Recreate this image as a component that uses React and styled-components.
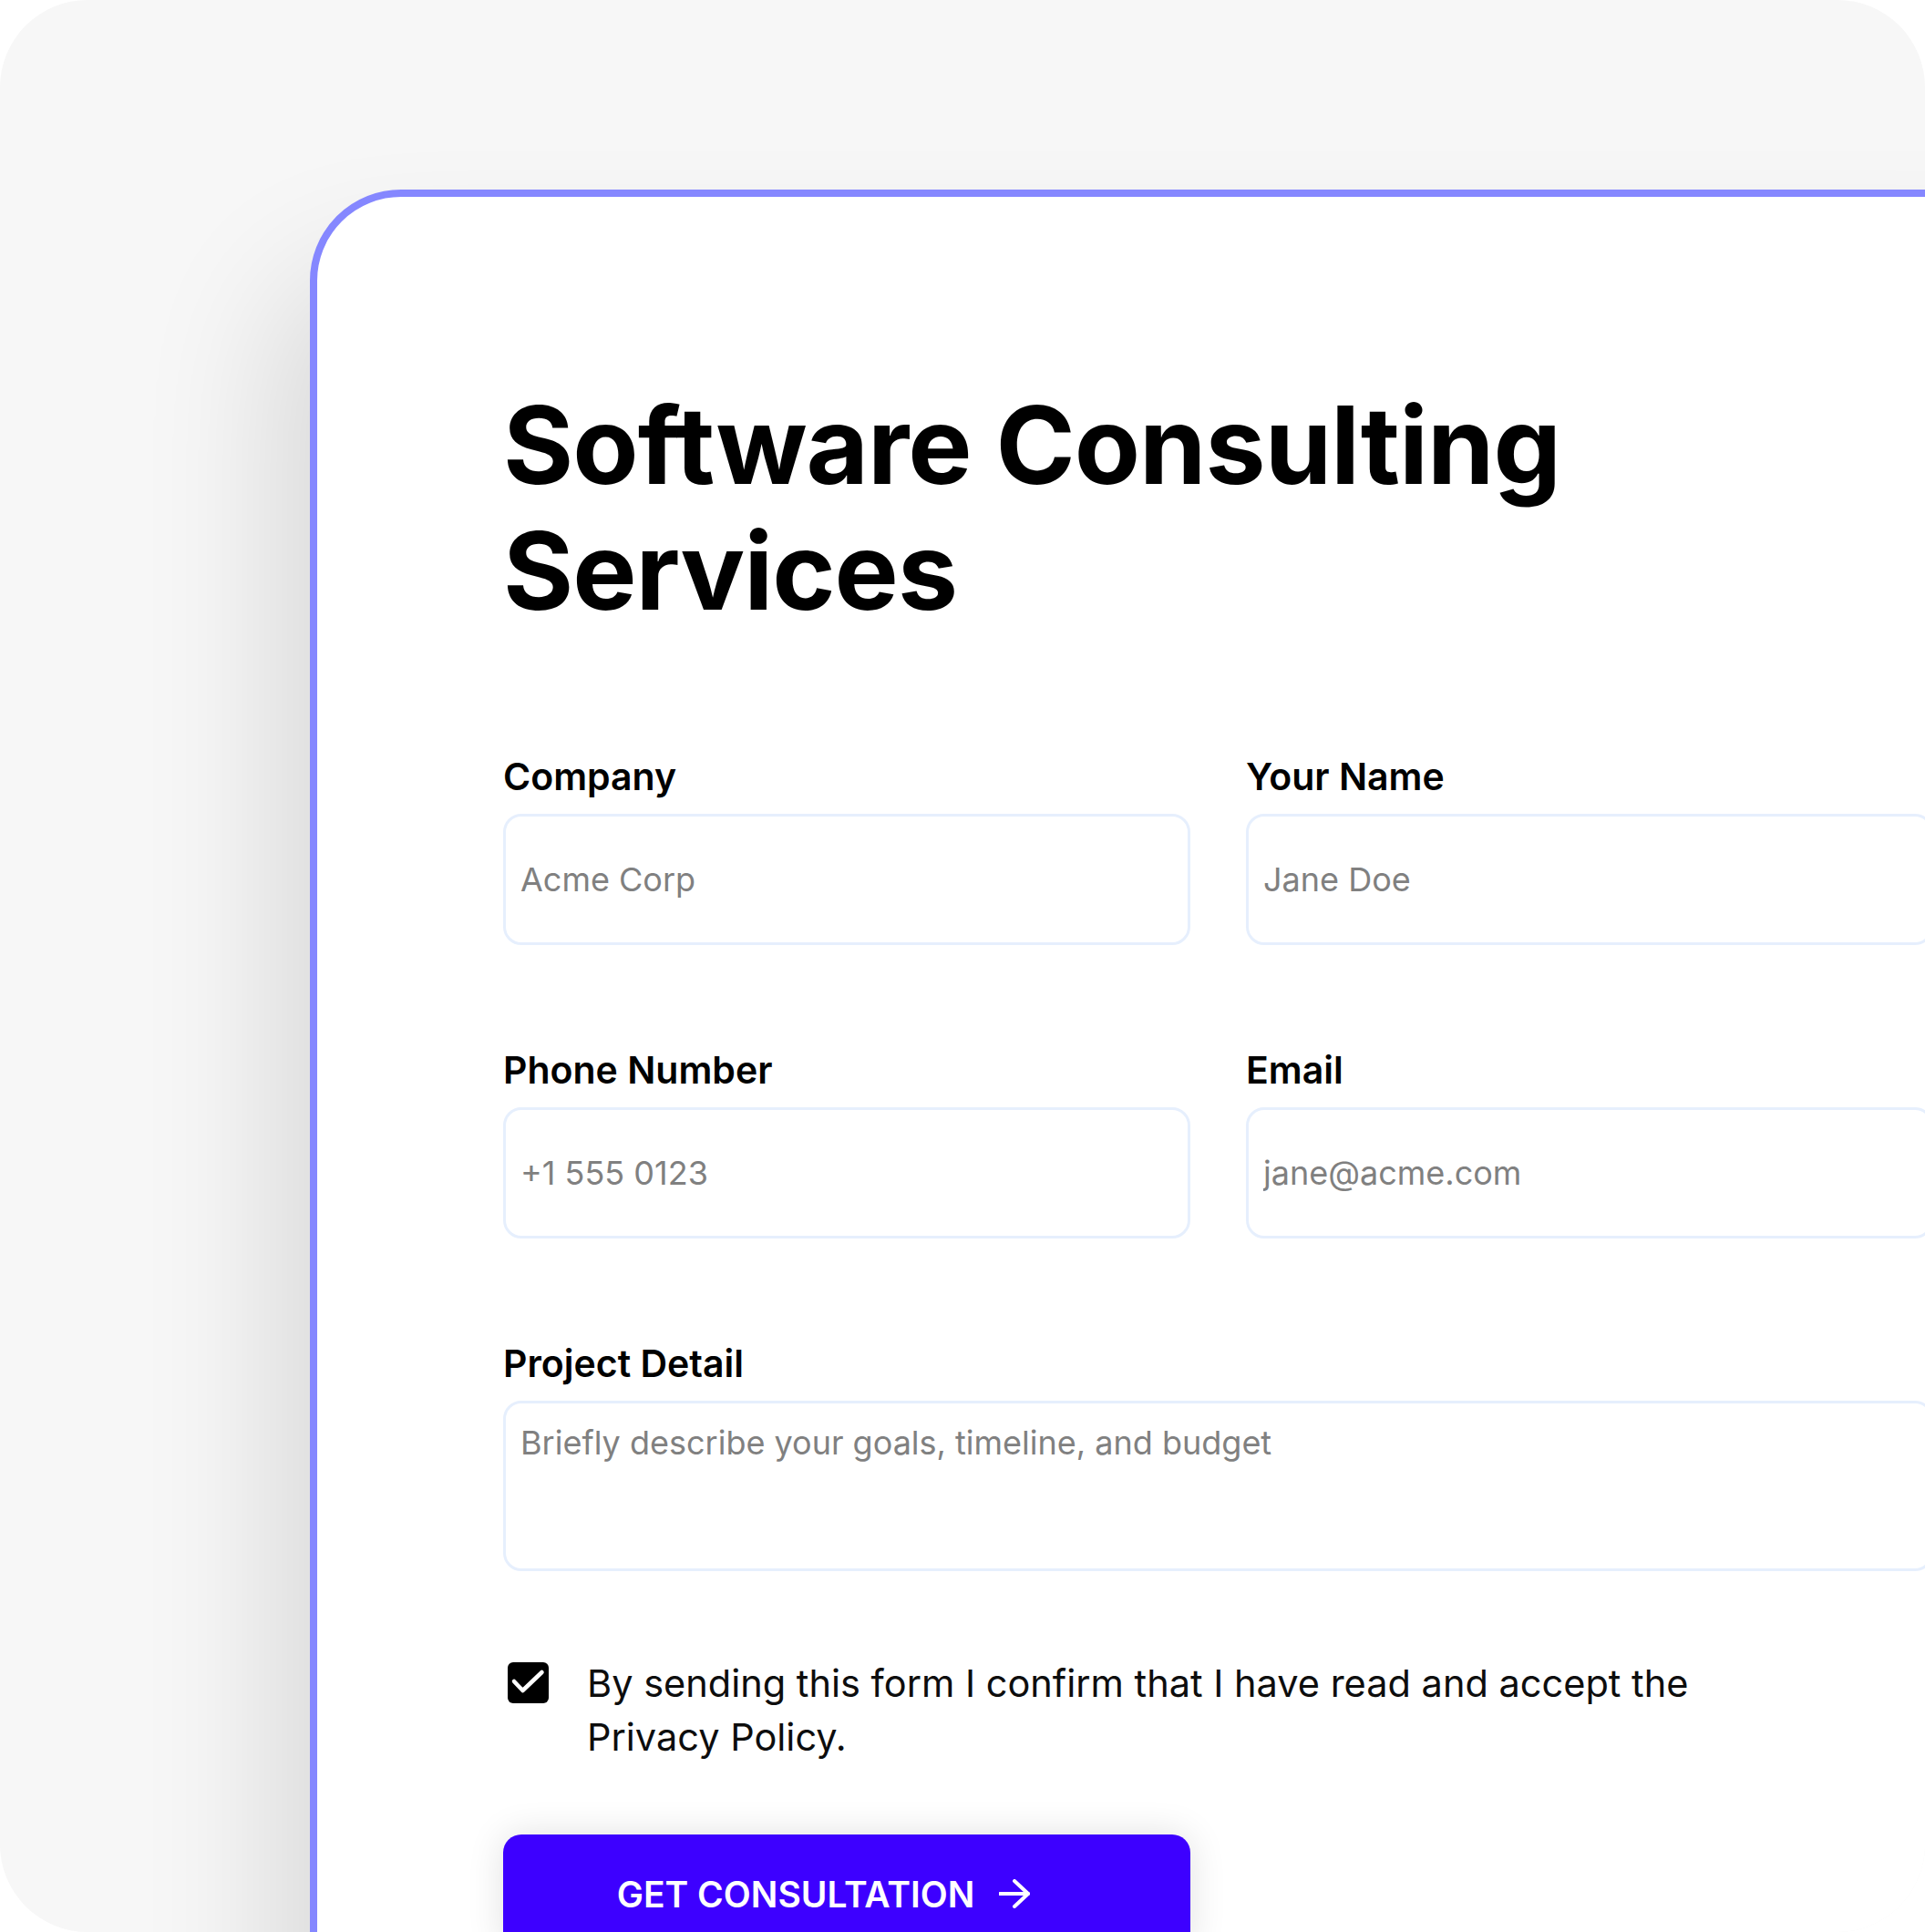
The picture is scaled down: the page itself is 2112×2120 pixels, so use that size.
import React from "react";
import styled, { createGlobalStyle } from "styled-components";

const GlobalStyle = createGlobalStyle`
  html, body {
    margin: 0;
    padding: 0;
    background: #ffffff;
  }
  body {
    font-family: Inter, "Noto Sans", sans-serif;
    color: #000;
    -webkit-font-smoothing: antialiased;
  }
  * {
    box-sizing: border-box;
  }
`;

const App = () => {
  return (
    <>
      <GlobalStyle />
      <Page>
        <Card>
          <Title>
            Software Consulting
            <br />
            Services
          </Title>

          <FieldsGrid>
            <Field>
              <Label>Company</Label>
              <Input placeholder="Acme Corp" />
            </Field>
            <Field>
              <Label>Your Name</Label>
              <Input placeholder="Jane Doe" />
            </Field>
            <Field>
              <Label>Phone Number</Label>
              <Input placeholder="+1 555 0123" />
            </Field>
            <Field>
              <Label>Email</Label>
              <Input placeholder="jane@acme.com" />
            </Field>
            <Field wide>
              <Label>Project Detail</Label>
              <TextArea placeholder="Briefly describe your goals, timeline, and budget" />
            </Field>
          </FieldsGrid>

          <ConsentRow>
            <CheckBox>
              <svg width="45" height="45" viewBox="0 0 45 45" fill="none">
                <path
                  d="M7 21 L16.5 31 L37.5 11"
                  stroke="#fff"
                  strokeWidth="4.5"
                  strokeLinecap="round"
                  strokeLinejoin="round"
                />
              </svg>
            </CheckBox>
            <ConsentText>
              By sending this form I confirm that I have read and accept the
              Privacy Policy.
            </ConsentText>
          </ConsentRow>

          <SubmitButton>
            GET CONSULTATION
            <svg width="34" height="32" viewBox="0 0 34 32" fill="none">
              <path d="M1 16 H32" stroke="#fff" strokeWidth="4" strokeLinecap="round" />
              <path
                d="M17 2 L32 16 L17 30"
                stroke="#fff"
                strokeWidth="4"
                strokeLinecap="round"
                strokeLinejoin="round"
              />
            </svg>
          </SubmitButton>
        </Card>
      </Page>
    </>
  );
};

export default App;

const Page = styled.div`
  width: 2112px;
  height: 2120px;
  overflow: hidden;
  background: #f7f7f7;
  border-radius: 96px;
  padding: 208px 0 0 340px;
`;

const Card = styled.div`
  width: 1993px;
  min-height: 2100px;
  background: #ffffff;
  border: 8px solid #8587ff;
  border-radius: 100px;
  box-shadow: -40px 90px 150px rgba(0, 0, 0, 0.12);
  padding: 203px 204px 0;
`;

const Title = styled.h1`
  margin: 0;
  font-size: 118px;
  line-height: 138px;
  font-weight: 700;
  letter-spacing: -1px;
  color: #000;
`;

const FieldsGrid = styled.div`
  display: grid;
  grid-template-columns: 1fr 1fr;
  column-gap: 61px;
  row-gap: 113px;
  margin-top: 133px;
`;

const Field = styled.div`
  display: flex;
  flex-direction: column;
  gap: 17px;
  grid-column: ${(p) => (p.wide ? "1 / -1" : "auto")};
`;

const Label = styled.label`
  font-size: 41px;
  line-height: 48px;
  font-weight: 600;
  color: #000;
`;

const Input = styled.input`
  height: 144px;
  width: 100%;
  border: 3px solid #e6effd;
  border-radius: 20px;
  padding: 0 16px;
  font-family: inherit;
  font-size: 36px;
  color: #222;
  background: #fff;
  outline: none;

  &::placeholder {
    color: #808080;
  }
`;

const TextArea = styled.textarea`
  height: 187px;
  width: 100%;
  border: 3px solid #e6effd;
  border-radius: 20px;
  padding: 16px 16px;
  font-family: inherit;
  font-size: 36px;
  line-height: 54px;
  resize: none;
  outline: none;
  background: #fff;

  &::placeholder {
    color: #808080;
  }
`;

const ConsentRow = styled.div`
  display: flex;
  align-items: flex-start;
  gap: 42px;
  margin-top: 94px;
  padding-left: 5px;
`;

const CheckBox = styled.span`
  flex: none;
  width: 45px;
  height: 45px;
  margin-top: 6px;
  border-radius: 6px;
  background: #000;
  display: flex;

  svg {
    display: block;
  }
`;

const ConsentText = styled.p`
  margin: 0;
  max-width: 1260px;
  font-size: 41.5px;
  line-height: 59px;
  font-weight: 400;
  color: #0d0d0d;
`;

const SubmitButton = styled.button`
  margin-top: 77px;
  width: 754px;
  height: 130px;
  border: none;
  border-radius: 20px;
  background: #3d00ff;
  color: #fff;
  font-family: inherit;
  font-size: 39px;
  font-weight: 600;
  display: flex;
  align-items: center;
  justify-content: center;
  gap: 27px;
  padding: 0 51px 0 0;
  box-shadow: 0 0 40px rgba(0, 0, 0, 0.12);
  cursor: pointer;
`;
